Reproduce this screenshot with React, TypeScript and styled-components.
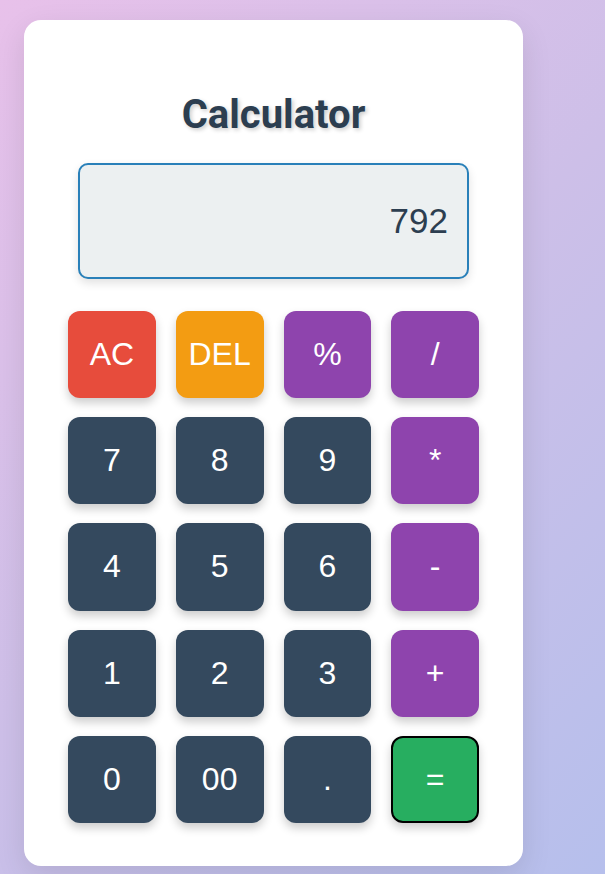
import React from "react";
import styled, { createGlobalStyle } from "styled-components";

const GlobalStyle = createGlobalStyle`
  html, body {
    margin: 0;
    padding: 0;
  }
  body {
    min-height: 874px;
    background: linear-gradient(135deg, #e8c1ea 0%, #cdbfe8 50%, #b6bfec 100%);
    font-family: "Liberation Sans", Arial, sans-serif;
    overflow: hidden;
  }
`;

const Page = styled.div`
  display: flex;
  align-items: flex-start;
  padding: 20px 0 0 24px;
`;

const Card = styled.div`
  width: 499px;
  box-sizing: border-box;
  background: #ffffff;
  border-radius: 17px;
  padding: 44px 44px 43px;
  box-shadow: 0 10px 30px rgba(0, 0, 0, 0.1);
  display: flex;
  flex-direction: column;
  align-items: center;
`;

const Title = styled.h1`
  margin: 27px 0 25px;
  font-family: Roboto, "Noto Sans", sans-serif;
  font-weight: 700;
  font-size: 40px;
  line-height: 47px;
  color: #2c3e50;
  text-shadow: 2px 2px 4px rgba(0, 0, 0, 0.2);
`;

const Display = styled.div`
  width: 391px;
  height: 116px;
  box-sizing: border-box;
  border: 2px solid #2980b9;
  border-radius: 10px;
  background: #ecf0f1;
  box-shadow: 0 4px 10px rgba(0, 0, 0, 0.12);
  display: flex;
  align-items: center;
  justify-content: flex-end;
  padding: 0 19px;
  font-family: "Liberation Sans", Arial, sans-serif;
  font-size: 35px;
  color: #2c3e50;
  margin-bottom: 32px;
`;

const Keys = styled.div`
  width: 411px;
  display: grid;
  grid-template-columns: repeat(4, 1fr);
  grid-auto-rows: 87.2px;
  column-gap: 20px;
  row-gap: 19px;
`;

type Variant = "clear" | "del" | "op" | "num" | "eq";

const colors: Record<Variant, string> = {
  clear: "#e74c3c",
  del: "#f39c12",
  op: "#8e44ad",
  num: "#34495e",
  eq: "#27ae60",
};

const Key = styled.button<{ $variant: Variant }>`
  box-sizing: border-box;
  border: ${(p) => (p.$variant === "eq" ? "2px solid #000000" : "none")};
  border-radius: 12px;
  background: ${(p) => colors[p.$variant]};
  color: #ffffff;
  font-family: "Liberation Sans", Arial, sans-serif;
  font-size: 32px;
  padding: 0;
  box-shadow: 0 5px 10px rgba(0, 0, 0, 0.2);
  display: flex;
  align-items: center;
  justify-content: center;
  cursor: pointer;
`;

const keys: { label: string; variant: Variant }[] = [
  { label: "AC", variant: "clear" },
  { label: "DEL", variant: "del" },
  { label: "%", variant: "op" },
  { label: "/", variant: "op" },
  { label: "7", variant: "num" },
  { label: "8", variant: "num" },
  { label: "9", variant: "num" },
  { label: "*", variant: "op" },
  { label: "4", variant: "num" },
  { label: "5", variant: "num" },
  { label: "6", variant: "num" },
  { label: "-", variant: "op" },
  { label: "1", variant: "num" },
  { label: "2", variant: "num" },
  { label: "3", variant: "num" },
  { label: "+", variant: "op" },
  { label: "0", variant: "num" },
  { label: "00", variant: "num" },
  { label: ".", variant: "num" },
  { label: "=", variant: "eq" },
];

export default function App() {
  return (
    <>
      <GlobalStyle />
      <Page>
        <Card>
          <Title>Calculator</Title>
          <Display>792</Display>
          <Keys>
            {keys.map((k) => (
              <Key key={k.label} $variant={k.variant}>
                {k.label}
              </Key>
            ))}
          </Keys>
        </Card>
      </Page>
    </>
  );
}
